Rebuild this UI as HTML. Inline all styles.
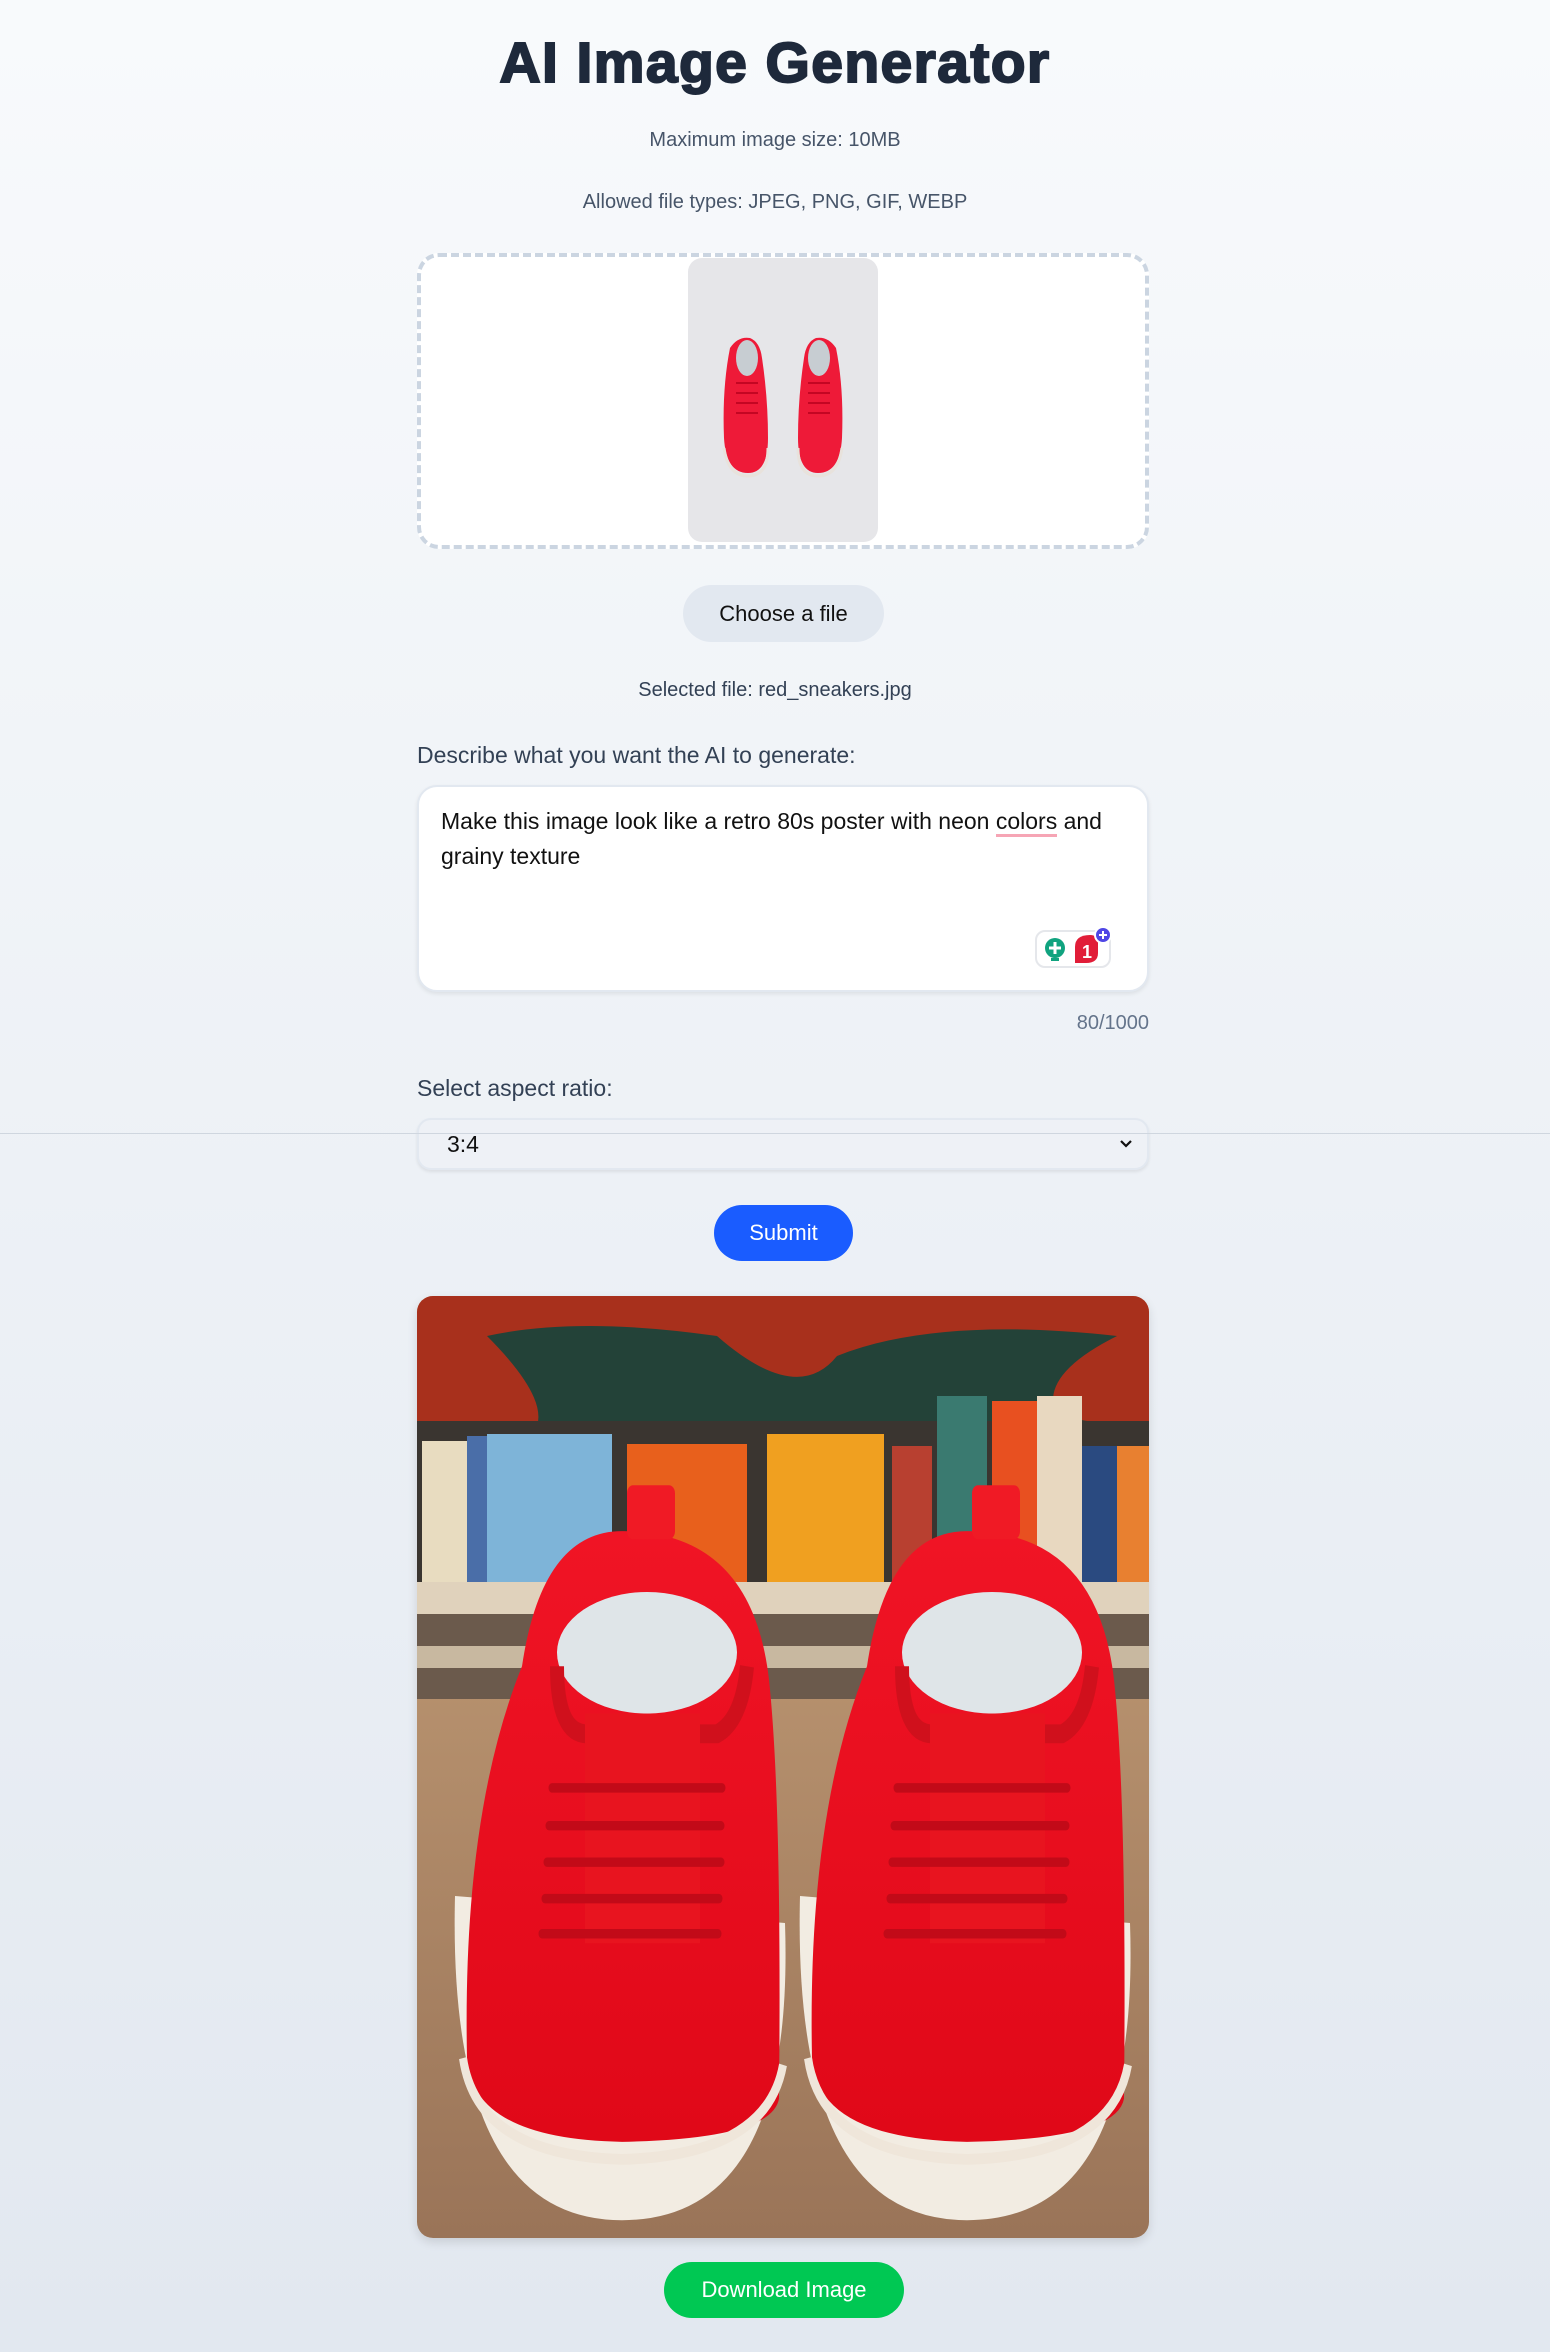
<!DOCTYPE html>
<html><head><meta charset="utf-8"><style>
*{box-sizing:border-box;margin:0;padding:0}
html,body{width:1550px;height:2352px;overflow:hidden}
body{background:linear-gradient(#f8fafc,#e2e8f0);font-family:"Liberation Sans",Arial,sans-serif;position:relative;color:#1e293b}
.a{position:absolute}
.c{left:0;width:1550px;text-align:center}
h1{position:absolute;left:0;width:1550px;text-align:center;top:30px;font-size:57px;font-weight:900;color:#1e293b;letter-spacing:1.4px;-webkit-text-stroke:2px #1e293b}
.s{font-size:20px;color:#475569}
</style></head><body>
<h1>AI Image Generator</h1>
<div class="a c s" style="top:129px">Maximum image size: 10MB</div>
<div class="a c s" style="top:191px">Allowed file types: JPEG, PNG, GIF, WEBP</div>
<div class="a" style="left:417px;top:253px;width:732px;height:296px;border:4px dashed #cbd5e1;border-radius:22px;background:#fff"></div>
<div class="a" style="left:688px;top:258px;width:190px;height:284px;background:#e6e6e9;border-radius:14px">
<svg width="190" height="284" viewBox="0 0 190 284">
<g fill="#ee1a38">
<path d="M42,90 Q50,78 62,80 Q72,84 74,100 Q80,140 80,180 Q80,215 60,215 Q38,215 36,180 Q34,130 42,90Z"/>
<path d="M148,90 Q140,78 128,80 Q118,84 116,100 Q110,140 110,180 Q110,215 130,215 Q152,215 154,180 Q156,130 148,90Z"/>
</g>
<g fill="#c7cdd2"><ellipse cx="59" cy="100" rx="11" ry="18"/><ellipse cx="131" cy="100" rx="11" ry="18"/></g>
<g fill="none" stroke="#e8e2dc" stroke-width="3"><path d="M36,190 Q40,218 60,218 Q80,218 80,190"/><path d="M110,190 Q110,218 130,218 Q150,218 154,190"/></g>
<g stroke="#b5001c" stroke-width="1.5"><path d="M48,125h22M48,135h22M48,145h22M48,155h22M120,125h22M120,135h22M120,145h22M120,155h22"/></g>
</svg></div>
<div class="a" style="left:683px;top:585px;width:201px;height:57px;background:#e2e8f0;border-radius:29px;font-size:22px;line-height:57px;text-align:center;color:#111">Choose a file</div>
<div class="a c" style="top:679px;font-size:20px;color:#334155">Selected file: red_sneakers.jpg</div>
<div class="a" style="left:417px;top:742px;font-size:23px;color:#334155">Describe what you want the AI to generate:</div>
<div class="a" style="left:417px;top:785px;width:732px;height:207px;background:#fff;border:2px solid #e2e8f0;border-radius:20px;box-shadow:0 2px 4px rgba(0,0,0,.08);padding:17px 22px;font-size:23px;line-height:35px;color:#111">Make this image look like a retro 80s poster with neon <span style="border-bottom:3px solid #f6a5b5">colors</span> and grainy texture</div>
<div class="a" style="left:1035px;top:930px;width:76px;height:38px;background:#fff;border:2px solid #e5e7eb;border-radius:10px"></div>
<svg class="a" style="left:1040px;top:925px" width="75" height="45" viewBox="0 0 75 45">
<circle cx="15" cy="23" r="10" fill="#10a37f"/><rect x="11" y="33" width="8" height="3" fill="#10a37f"/><path d="M15,17v12M9,23h12" stroke="#fff" stroke-width="3"/>
<path d="M35,22 Q35,10 50,10 Q58,10 58,18 L58,28 Q58,38 46,38 L35,38Z" fill="#e11d38"/><text x="42" y="33" font-size="18" font-weight="bold" fill="#fff" font-family="Liberation Sans">1</text>
<circle cx="63" cy="10" r="8" fill="#4f46e5" stroke="#fff" stroke-width="2"/><path d="M63,6v8M59,10h8" stroke="#fff" stroke-width="2"/>
</svg>
<div class="a" style="left:1000px;width:149px;text-align:right;top:1012px;font-size:20px;color:#64748b">80/1000</div>
<div class="a" style="left:417px;top:1075px;font-size:23px;color:#334155">Select aspect ratio:</div>
<div class="a" style="left:417px;top:1118px;width:732px;height:52px;background:#eef1f6;border:2px solid #e2e8f0;border-radius:14px;box-shadow:0 2px 3px rgba(0,0,0,.08);font-size:23px;line-height:48px;padding-left:28px;color:#111">3:4<svg style="position:absolute;right:14px;top:19px" width="14" height="10" viewBox="0 0 14 10"><path d="M2,2 7,7 12,2" fill="none" stroke="#111" stroke-width="2.2"/></svg></div>
<div class="a" style="left:0;top:1133px;width:1550px;height:1px;background:#cfd6df"></div>
<div class="a" style="left:714px;top:1205px;width:139px;height:56px;background:#1a5cff;border-radius:28px;color:#fff;font-size:22px;line-height:56px;text-align:center">Submit</div>
<div class="a" style="left:417px;top:1296px;width:732px;height:942px;border-radius:16px;overflow:hidden;box-shadow:0 4px 10px rgba(0,0,0,.12)">
<svg width="732" height="942" viewBox="0 0 732 942">
<defs><linearGradient id="t" x1="0" y1="0" x2="0" y2="1"><stop offset="0" stop-color="#c9a47c"/><stop offset="1" stop-color="#9a7458"/></linearGradient>
<linearGradient id="r" x1="0" y1="0" x2="0" y2="1"><stop offset="0" stop-color="#f01425"/><stop offset="1" stop-color="#e00818"/></linearGradient></defs>
<rect width="732" height="942" fill="url(#t)"/>
<rect width="732" height="130" fill="#a8301c"/>
<path d="M70,40 Q160,20 300,40 Q380,110 420,60 Q520,20 700,40 Q620,80 640,120 L700,130 L120,130 Q130,100 70,40Z" fill="#234238"/>
<rect y="125" width="732" height="165" fill="#3a3530"/>
<rect x="5" y="145" width="45" height="143" fill="#e8dcc0"/><rect x="50" y="140" width="20" height="148" fill="#4a6ea8"/>
<rect x="70" y="138" width="125" height="150" fill="#7eb4d8"/><rect x="210" y="148" width="120" height="140" fill="#e8601c"/>
<rect x="350" y="138" width="117" height="150" fill="#f0a020"/><rect x="475" y="150" width="40" height="138" fill="#b84030"/>
<rect x="520" y="100" width="50" height="188" fill="#3a7a70"/><rect x="575" y="105" width="45" height="183" fill="#e85020"/>
<rect x="620" y="100" width="45" height="188" fill="#e8d8c0"/><rect x="665" y="150" width="35" height="138" fill="#2a4a80"/><rect x="700" y="150" width="32" height="138" fill="#e88030"/>
<rect y="286" width="732" height="32" fill="#e0d2bc"/><rect y="318" width="732" height="85" fill="#6b5a4c"/><rect y="350" width="732" height="22" fill="#c8b8a0"/>
<g transform="matrix(1,0,0,1.351,0,-8)">
<g id="s">
<path d="M38,450 Q30,690 205,690 Q378,690 368,470Z" fill="#f2ece2"/>
<path d="M50,570 Q45,390 105,280 Q125,180 205,180 Q335,180 352,290 Q365,380 362,600 Q355,630 205,632 Q55,630 50,570Z" fill="url(#r)"/>
<rect x="210" y="146" width="48" height="40" rx="6" fill="#f01a25"/>
<ellipse cx="230" cy="270" rx="90" ry="45" fill="#dfe5e8"/>
<path d="M140,280 Q140,330 170,330 L300,330 Q325,320 330,280" fill="none" stroke="#d0101c" stroke-width="14"/>
<rect x="168" y="315" width="115" height="170" fill="#e8141f"/>
<g stroke="#c20a18" stroke-width="7" stroke-linecap="round"><path d="M135,370h170M132,398h172M130,425h174M128,452h174M125,478h176"/></g>
<path d="M46,570 Q60,642 205,645 Q350,642 366,575" fill="none" stroke="#efe6da" stroke-width="8"/>
</g>
<use href="#s" transform="translate(345,0)"/>
</g>
</svg></div>
<div class="a" style="left:664px;top:2262px;width:240px;height:56px;background:#00c853;border-radius:28px;color:#fff;font-size:22px;line-height:56px;text-align:center">Download Image</div>
</body></html>
